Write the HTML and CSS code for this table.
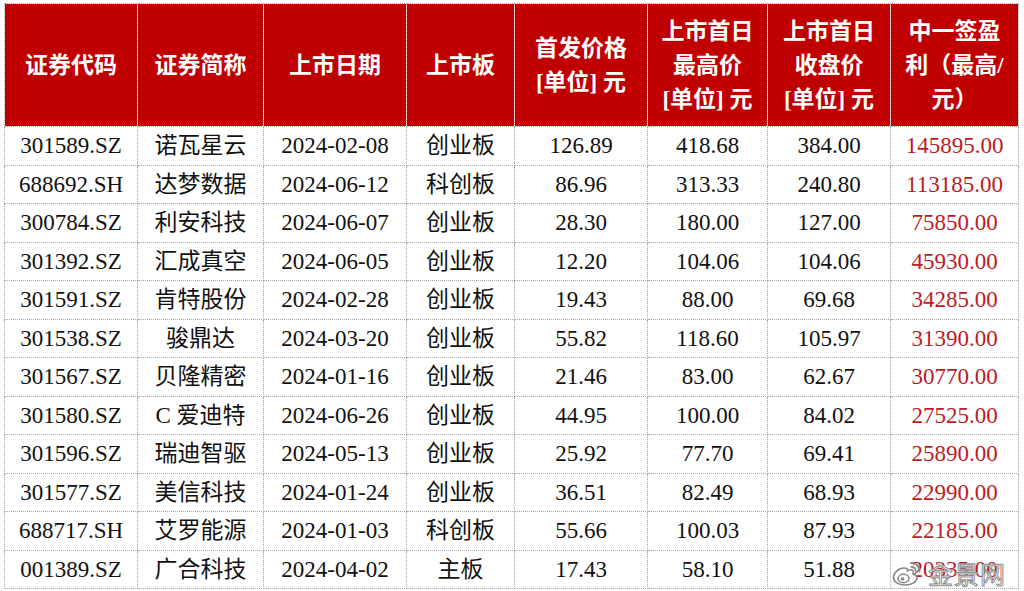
FILE: index.html
```html
<!DOCTYPE html>
<html lang="zh-CN">
<head>
<meta charset="utf-8">
<title>IPO</title>
<link rel="stylesheet" href="styles.css">
</head>
<body>
<div class="wrap">
<table class="ipo">
<colgroup>
<col class="c1"><col class="c2"><col class="c3"><col class="c4"><col class="c5"><col class="c6"><col class="c7"><col class="c8">
</colgroup>
<thead>
<tr>
<th>证券代码</th><th>证券简称</th><th>上市日期</th><th>上市板</th>
<th>首发价格<br>[单位] 元</th>
<th>上市首日<br>最高价<br>[单位] 元</th>
<th>上市首日<br>收盘价<br>[单位] 元</th>
<th>中一签盈<br>利（最高/<br>元）</th>
</tr>
</thead>
<tbody>
<tr><td>301589.SZ</td><td>诺瓦星云</td><td>2024-02-08</td><td>创业板</td><td>126.89</td><td>418.68</td><td>384.00</td><td class="red">145895.00</td></tr>
<tr><td>688692.SH</td><td>达梦数据</td><td>2024-06-12</td><td>科创板</td><td>86.96</td><td>313.33</td><td>240.80</td><td class="red">113185.00</td></tr>
<tr><td>300784.SZ</td><td>利安科技</td><td>2024-06-07</td><td>创业板</td><td>28.30</td><td>180.00</td><td>127.00</td><td class="red">75850.00</td></tr>
<tr><td>301392.SZ</td><td>汇成真空</td><td>2024-06-05</td><td>创业板</td><td>12.20</td><td>104.06</td><td>104.06</td><td class="red">45930.00</td></tr>
<tr><td>301591.SZ</td><td>肯特股份</td><td>2024-02-28</td><td>创业板</td><td>19.43</td><td>88.00</td><td>69.68</td><td class="red">34285.00</td></tr>
<tr><td>301538.SZ</td><td>骏鼎达</td><td>2024-03-20</td><td>创业板</td><td>55.82</td><td>118.60</td><td>105.97</td><td class="red">31390.00</td></tr>
<tr><td>301567.SZ</td><td>贝隆精密</td><td>2024-01-16</td><td>创业板</td><td>21.46</td><td>83.00</td><td>62.67</td><td class="red">30770.00</td></tr>
<tr><td>301580.SZ</td><td>C 爱迪特</td><td>2024-06-26</td><td>创业板</td><td>44.95</td><td>100.00</td><td>84.02</td><td class="red">27525.00</td></tr>
<tr><td>301596.SZ</td><td>瑞迪智驱</td><td>2024-05-13</td><td>创业板</td><td>25.92</td><td>77.70</td><td>69.41</td><td class="red">25890.00</td></tr>
<tr><td>301577.SZ</td><td>美信科技</td><td>2024-01-24</td><td>创业板</td><td>36.51</td><td>82.49</td><td>68.93</td><td class="red">22990.00</td></tr>
<tr><td>688717.SH</td><td>艾罗能源</td><td>2024-01-03</td><td>科创板</td><td>55.66</td><td>100.03</td><td>87.93</td><td class="red">22185.00</td></tr>
<tr><td>001389.SZ</td><td>广合科技</td><td>2024-04-02</td><td>主板</td><td>17.43</td><td>58.10</td><td>51.88</td><td class="red">20335.00</td></tr>
</tbody>
</table>
<div class="watermark">
<svg class="wb" width="30" height="26" viewBox="0 0 30 26">
<path d="M12 8 C6 8 1.5 13 1.5 17.5 C1.5 22 6.5 25 13 25 C20 25 25 21.5 25 18 C25 15.5 22.5 14.5 21 14 C22 11.5 21 9.5 18 10 C16.5 10.3 15.5 10.8 15.5 10.8 C16 8.5 14.5 8 12 8 Z" fill="#fff" stroke="#8a8a8a" stroke-width="1.6"/>
<ellipse cx="11.5" cy="18.5" rx="5.5" ry="4.2" fill="#fff" stroke="#8a8a8a" stroke-width="1.6"/>
<circle cx="10.5" cy="19" r="1.8" fill="#8a8a8a"/>
<path d="M19 3 C24 2.5 28 6.5 27.5 11.5" fill="none" stroke="#8a8a8a" stroke-width="2" stroke-linecap="round"/>
<path d="M19.5 7 C22 6.8 24 8.8 23.6 11" fill="none" stroke="#8a8a8a" stroke-width="1.8" stroke-linecap="round"/>
</svg>
<span class="wm-text">金景网</span>
</div>
</div>
</body>
</html>
```

FILE: styles.css
```css
html, body {
  margin: 0;
  padding: 0;
  background: #ffffff;
}

.wrap {
  position: relative;
  width: 1024px;
  height: 591px;
  padding: 3px 0 0 4px;
  box-sizing: border-box;
  overflow: hidden;
}

.ipo {
  width: 1014px;
  table-layout: fixed;
  border-collapse: collapse;
  font-family: "Liberation Serif", "Noto Sans CJK SC", serif;
  font-size: 23px;
  color: #111;
}

.c1 { width: 133px; }
.c2 { width: 126px; }
.c3 { width: 143px; }
.c4 { width: 108px; }
.c5 { width: 133px; }
.c6 { width: 120px; }
.c7 { width: 123px; }
.c8 { width: 128px; }

.ipo th,
.ipo td {
  border: 1px dotted #a8a8a8;
  text-align: center;
  vertical-align: middle;
  padding: 0;
  white-space: nowrap;
  overflow: hidden;
}

.ipo th {
  background: #c00000;
  color: #ffffff;
  font-weight: bold;
  height: 120px;
  line-height: 34px;
  font-size: 23px;
  padding-top: 2px;
}

.ipo td {
  height: 36.5px;
  line-height: 26px;
  padding-top: 1px;
}

.ipo td.red {
  color: #be1a24;
}

.watermark {
  position: absolute;
  left: 892px;
  top: 558px;
  display: flex;
  align-items: center;
  gap: 6px;
}

.wb {
  display: block;
}

.wm-text {
  font-family: "Noto Sans CJK SC", sans-serif;
  font-size: 25px;
  line-height: 30px;
  color: rgba(255, 255, 255, 0.82);
  -webkit-text-stroke: 1px #8f8f8f;
  letter-spacing: 1px;
}
```
